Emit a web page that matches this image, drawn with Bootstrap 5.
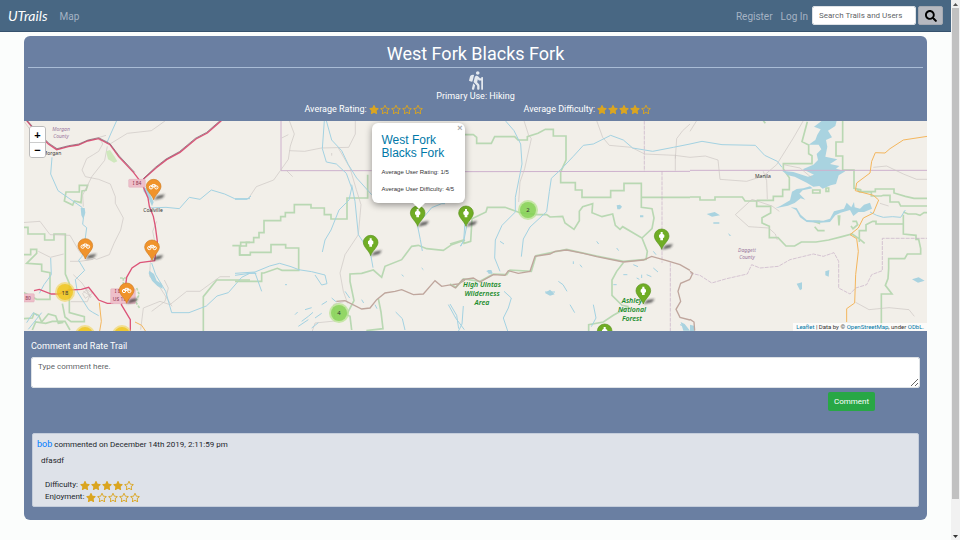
<!DOCTYPE html>
<html lang="en">
<head>
<meta charset="utf-8">
<meta name="viewport" content="width=device-width, initial-scale=1">
<title>UTrails - West Fork Blacks Fork</title>
<link href="https://cdn.jsdelivr.net/npm/bootstrap@5.3.0/dist/css/bootstrap.min.css" rel="stylesheet">
<style>
  body { font-family: Roboto, "Liberation Sans", sans-serif; font-size: 9px; line-height: 12px; background: #fbfdfc; color: #212529; }
  .top-nav { background: #486783; border-bottom: 1px solid #36526d; height: 32px; padding: 0 8px; }
  .brand { font-family: Lato, cursive; font-style: italic; font-size: 14px; line-height: 20px; color: #fff; text-decoration: none; }
  .nav-text { font-size: 10px; line-height: 16px; color: #a5b3c3; text-decoration: none; padding-top: 2px; }
  .nav-form { gap: 2px; }
  .search-box { width: 104px; height: 19px; font-size: 8px; padding: 0 0 0 6px; border-radius: 2px; }
  .search-btn { width: 25px; height: 19px; padding: 0; background: #b6b9c0; border: 1px solid #a5aab2; border-radius: 2px; line-height: 1; }
  .trail-panel { background: #6a7fa2; margin: 4px 24px 20px; border-radius: 6px; }
  .trail-head { padding: 4px; height: 85px; color: #fff; }
  .trail-head h1 { font-size: 18px; line-height: 27px; font-weight: 400; border-bottom: 1px solid #a9bcd6; margin-bottom: 3px; }
  .hiker { height: 19px; width: 14px; fill: #e4e9ef; display: block; margin: 0 auto; }
  .rate-row { margin-top: 1px; }
  .stars { gap: 1px; margin-left: 2px; }
  .stars svg { width: 10px; height: 9px; fill: #daa520; }
  .map-box { height: 210px; background: #f2efe9; overflow: hidden; }
  .zoom-ctl { left: 5px; top: 5px; border: 1px solid #bbb; border-radius: 3px; overflow: hidden; }
  .zoom-ctl button { width: 15px; height: 15px; background: #fff; border: 0; padding: 0; font: bold 11px/14px "Liberation Sans", sans-serif; color: #000; }
  .zoom-ctl button + button { border-top: 1px solid #ccc; }
  .map-popup { left: calc(50% - 104px); top: 2px; width: 93px; height: 80px; background: #fff; border-radius: 6px; padding: 10px; box-shadow: 0 2px 7px #0006; font: 6px/9px "Liberation Sans", sans-serif; color: #333; }
  .map-popup::after { content: ""; position: absolute; left: 41px; bottom: -6px; border: 6px solid transparent; border-top-color: #fff; border-bottom: 0; }
  .map-popup h2 { font-size: 12px; line-height: 13px; font-weight: 400; color: #0078a8; margin: 1px 0 8px; }
  .map-popup p { margin: 0 0 8px; white-space: nowrap; }
  .popup-x { right: 2px; top: 1px; border: 0; background: none; padding: 0; color: #aaa; font: bold 9px/9px "Liberation Sans", sans-serif; }
  .map-credit { right: 0; bottom: 0; background: #ffffffb8; font: 6px/8px Roboto, sans-serif; color: #333; padding: 0 3px; }
  .map-credit a { color: #0078a8; text-decoration: none; }
  .comment-form { padding: 9px 7px 0; }
  .comment-form label { color: #fff; line-height: 12px; margin-bottom: 5px; display: block; }
  .comment-form textarea { height: 31px; min-height: 31px; padding: 3px 6px; font-size: 8px; line-height: 12px; border-radius: 2px; }
  .send-btn { background: #28a745; color: #fff; border: 0; border-radius: 2px; font-size: 8px; line-height: 13px; padding: 3px 6px; margin: 4px 45px 0 0; }
  .note-list { display: flow-root; }
  .note { background: #dee2e9; border: 1px solid #c4cddb; border-radius: 2px; margin: 22px 8px 13px; height: 74px; padding: 4px; font-size: 8px; }
  .note-user { color: #007bff; font-size: 9px; text-decoration: none; }
  .side-scroll { width: 9px; background: #f1f1f1; height: 100vh; top: 0; }
  .side-thumb { width: 7px; background: #c1c1c1; flex: 0 0 91%; }
  .boundary { fill: none; stroke: #b9d8b3; stroke-width: 5; }
  .river { fill: none; stroke: #a3d2e2; stroke-width: 3; }
  .lake { fill: #a9d3e0; }
  .track { fill: none; stroke: #cbc6c3; stroke-width: 2; }
  .county { fill: none; stroke: #c5adc6; stroke-width: 2; stroke-dasharray: 12 3; }
  .state { fill: none; stroke: #cdb0cd; stroke-width: 3; }
  .highway { fill: none; stroke: #dc5478; stroke-width: 4; }
  .rail { fill: none; stroke: #775364; stroke-width: 2; }
  .amber { fill: none; stroke: #f4b65d; stroke-width: 3; }
  .ridge { fill: none; stroke: #bfa69d; stroke-width: 4; }
  .town { font: 5px "Noto Sans", sans-serif; fill: #333; text-anchor: middle; }
  .tally { font-size: 6px; }
  .road-no { fill: #8d3049; }
  .purple { font-style: italic; fill: #9b78a0; }
  .forest { font: italic 600 7px "Noto Sans", sans-serif; fill: #198c2b; text-anchor: middle; }
  .shield { fill: #eebfca; stroke: #d99bad; }
</style>
<script defer src="https://cdn.jsdelivr.net/npm/bootstrap@5.3.0/dist/js/bootstrap.bundle.min.js"></script>
</head>
<body class="d-flex align-items-start">
<svg width="0" height="0" class="position-absolute" aria-hidden="true">
  <defs>
    <symbol id="star-on" viewBox="0 0 576 512"><path d="M259.3 17.8L194 150.2 47.9 171.5c-26.2 3.8-36.7 36.1-17.7 54.6l105.7 103-25 145.5c-4.5 26.3 23.2 46 46.4 33.7L288 439.6l130.7 68.7c23.2 12.2 50.9-7.4 46.4-33.7l-25-145.5 105.7-103c19-18.5 8.5-50.8-17.7-54.6L382 150.2 316.7 17.8c-11.7-23.6-45.6-23.9-57.4 0z"/></symbol>
    <symbol id="star-off" viewBox="0 0 576 512"><path d="M528.1 171.5L382 150.2 316.7 17.8c-11.7-23.6-45.6-23.9-57.4 0L194 150.2 47.9 171.5c-26.2 3.8-36.7 36.1-17.7 54.6l105.7 103-25 145.5c-4.5 26.3 23.2 46 46.4 33.7L288 439.6l130.7 68.7c23.2 12.2 50.9-7.4 46.4-33.7l-25-145.5 105.7-103c19-18.5 8.5-50.8-17.7-54.6zM388.6 312.3l23.7 138.4L288 385.4l-124.3 65.3 23.7-138.4-100.6-98 139-20.2 62.2-126 62.2 126 139 20.2-100.6 98z"/></symbol>
    <filter id="soft" x="-50%" y="-50%" width="200%" height="200%"><feGaussianBlur stdDeviation="3"/></filter>
    <g id="pin-shape">
      <path d="M0 2 L12-11 34-15 26-4z" fill="#333" stroke="none" opacity=".75" filter="url(#soft)"/>
      <path d="M0 1C-4-13-22-25-22-39A22 21 0 0 1 22-39C22-25 4-13 0 1z"/>
    </g>
    <g id="pin-bike">
      <use href="#pin-shape" fill="#f0932b" stroke="#cf7c22" stroke-width="2"/>
      <g fill="none" stroke="#fff" stroke-width="3"><circle cx="-8" cy="-36" r="5"/><circle cx="8" cy="-36" r="5"/><path d="M-8-36l4-8h8l4 8M-4-44l4 8 5-8"/></g>
    </g>
    <g id="pin-hike">
      <use href="#pin-shape" fill="#70ad25" stroke="#5b9320" stroke-width="2"/>
      <path d="M-3-51h6v5l5 4v7l-4 3v6h-8v-6l-4-3v-7l5-4z" fill="#fff"/>
    </g>
  </defs>
</svg>

<div class="flex-grow-1">
  <nav class="top-nav d-flex align-items-center">
    <a class="brand" href="#">UTrails</a>
    <a class="nav-text ms-2 ps-1 me-auto" href="#">Map</a>
    <a class="nav-text" href="#">Register</a>
    <a class="nav-text ms-2 me-1" href="#">Log In</a>
    <form class="nav-form d-flex">
      <input class="form-control search-box" type="text" placeholder="Search Trails and Users" aria-label="Search Trails and Users">
      <button class="search-btn" type="button" aria-label="Search"><svg width="12" height="12" viewBox="0 0 512 512"><path d="M505 442.7L405.3 343c-4.5-4.5-10.6-7-17-7H372c27.6-35.3 44-79.7 44-128C416 93.1 322.9 0 208 0S0 93.1 0 208s93.1 208 208 208c48.3 0 92.7-16.4 128-44v16.3c0 6.4 2.5 12.5 7 17l99.700 99.7c9.4 9.4 24.6 9.4 33.9 0l28.3-28.3c9.4-9.4 9.4-24.6.1-34zM208 336c-70.7 0-128-57.2-128-128 0-70.7 57.2-128 128-128 70.7 0 128 57.2 128 128 0 70.7-57.2 128-128 128z"/></svg></button>
    </form>
  </nav>

  <main class="trail-panel">
    <header class="trail-head text-center">
      <h1>West Fork Blacks Fork</h1>
      <svg class="hiker" viewBox="0 0 384 512" aria-hidden="true"><path d="M80.95 472.23c-4.28 17.16 6.14 34.53 23.28 38.81 2.61.66 5.22.95 7.8.95 14.33 0 27.37-9.7 31.02-24.23l25.24-100.97-52.78-52.78-34.56 138.22zm14.89-196.12L137 117c2.19-8.42-3.14-16.95-11.92-19.06-43.88-10.52-88.35 15.07-99.32 57.17L.49 253.24c-2.19 8.42 3.14 16.95 11.92 19.06l63.56 15.25c8.79 2.1 17.68-3.02 19.87-11.44zM368 160h-16c-8.84 0-16 7.16-16 16v16h-34.75l-46.78-46.78C243.38 134.11 228.61 128 212.91 128c-27.02 0-50.47 18.3-57.03 44.52l-26.92 107.72a32.012 32.012 0 0 0 8.42 30.39L224 397.25V480c0 17.67 14.33 32 32 32s32-14.33 32-32v-82.75c0-17.09-6.66-33.16-18.75-45.25l-46.82-46.82c.15-.5.49-.89.62-1.41l19.89-79.57 22.43 22.43c6 6 14.14 9.38 22.62 9.38h48v240c0 8.84 7.16 16 16 16h16c8.84 0 16-7.16 16-16V176c.01-8.84-7.15-16-15.99-16zM240 96c26.51 0 48-21.49 48-48S266.51 0 240 0s-48 21.49-48 48 21.49 48 48 48z"/></svg>
      <div>Primary Use: Hiking</div>
      <div class="row g-0 w-50 mx-auto rate-row">
        <div class="col-6 d-flex justify-content-center align-items-center"><span>Average Rating:</span>
          <span class="stars d-flex" role="img" aria-label="1 of 5"><svg><use href="#star-on"/></svg><svg><use href="#star-off"/></svg><svg><use href="#star-off"/></svg><svg><use href="#star-off"/></svg><svg><use href="#star-off"/></svg></span></div>
        <div class="col-6 d-flex justify-content-center align-items-center"><span>Average Difficulty:</span>
          <span class="stars d-flex" role="img" aria-label="4 of 5"><svg><use href="#star-on"/></svg><svg><use href="#star-on"/></svg><svg><use href="#star-on"/></svg><svg><use href="#star-on"/></svg><svg><use href="#star-off"/></svg></span></div>
      </div>
    </header>

    <section class="map-box position-relative" aria-label="Trail map">
      <svg class="d-block w-100 h-100" viewBox="24 121 903 210" preserveAspectRatio="xMidYMid slice">
        <!-- western quarter -->
        <svg x="20" y="118" width="230" height="215" viewBox="0 0 690 645" overflow="visible">
          <g class="boundary">
            <path d="M138 222l40 0 0-20h25l-5 15-12 2-3 35-20-5-5 12-25-12z"/>
            <path d="M12 328h12l0 20h50v18h28v-18h34v120l12 28v88l45 12v15h-40l-18-14-8-40"/>
            <path d="M12 410l20 0v-16h18v12l-30 30 45 3v20l25 5v80h-40l-30-16-20-10"/>
            <path d="M12 602l25-2 5-14 14 6 9 20 20-24 22 6 8 22 15-3M37 636l10-24 30 4 20-6 38 0 15 26"/>
            <path d="M690 373h-28v10h-25l0 0h22v28h31M690 486H590l-40 50 0 109"/>
            <path d="M310 480v28M300 480h22M350 510l8 20-12 20 14 22" stroke-dasharray="8 4"/>
          </g>
          <g class="track">
            <path d="M240 62l8 16-12 22-16 10-20 12-14 34 10 20 40 8 35 14 15 38 0 20 24 44-8 36-20 40-14 34-38 14-50-20-30-52-60-2-30-40-70 5M262 85l-8 42-38 48-28 56 2 35M270 78l52-32 72-8 20-14 22-16M12 10l55 75"/>
            <path d="M450 560l-30-10-50 20-8 65M450 560l50-40 40 0 60-44 30 0M395 580l40-30 10-40-12-24M410 310l-12 30 8 40-15 50-2 45 32 35 35 55M150 430l30 0 40-6M160 470l26 25 24 36-8 20-50 0M55 400l36 18 40-10"/>
            <path d="M200 515l18 10-22 16-8-14zM190 520l25 16M196 512l16 28M238 58l20-6M236 66l24 4"/>
          </g>
          <g class="river">
            <path d="M290 8l-18 40-12 28M96 118l-4 50 22 50 72 50 6 16-4 35 12 10-6 46-8 40-10 12 18 30-28 28 6 36 34 54 12 8 18 10"/>
            <path d="M386 270l52-2 40 4 30-34 32 6 34-28 40 12 30 14 46 0M395 435l12 35 30 50 18 64 52 0 52-20 32-30 34-10 40-46 24-12 20 0M92 420l2 50-22 30-14 26M20 614l20-30 12 10M25 634l40-50"/>
          </g>
          <path class="lake" d="M370 205l15 10 10 24 6 14-5 12-10-24-16-22zM182 270h12l2 14-6 20-6-12zM388 458l14 10 8 20 16 10 2 14-16-8-16-16-10-22z"/>
          <path d="M258 100l12-4 14 20 8 14-10 4-18-10z" fill="#cfe8bd"/>
          <path class="highway" d="M20 8L45 38 85 78 110 95 145 86 175 81 203 69 236 62 270 80 296 116 341 164 365 195 384 240 388 265 400 295 406 325 412 370 404 428 360 434 336 450 320 478 312 540 304 560 331 605V640M370 184L408 150 440 125 480 103 528 63 562 45 604 8"/>
          <path class="highway" d="M42 518L58 514 94 528 116 528 146 516 184 514 206 508 236 546 262 556 280 556"/>
          <path class="rail" d="M22 8L47 36 87 76 111 92 146 83 176 78 204 66 236 59 270 77 298 114 344 163M370 182L406 148 438 123 478 101 526 61 560 43 600 8"/>
          <path class="amber" d="M238 554l6 56-6 35M345 612l20 10 12 18"/>
          <rect class="shield" x="326" y="184" width="50" height="24" rx="3"/><rect class="shield" x="272" y="512" width="74" height="45" rx="3"/><rect class="shield" x="-4" y="527" width="47" height="25" rx="3"/>
        </svg>
        <!-- west central -->
        <svg x="235" y="118" width="230" height="215" viewBox="0 0 690 645" overflow="visible">
          <g class="boundary">
            <path d="M14 384h20v-11h22v-14h16v-15h15v-36h50v-12h14v-12h27v-24h50v10h40v20h20v13h48v-63h62v-70M14 384v27h32v-8h62v-23h44v10h39v67h-50l-14-6-40 14h-7v25H0"/>
            <path d="M350 636L345 595 335 590 357 548 345 490V468L380 466 415 456 440 478 450 445 500 425 530 385 550 382 575 392 625 397 650 380 690 366M430 542l8 40 6 50-50 6"/>
          </g>
          <path class="state" d="M138 8v150h272"/>
          <g class="track">
            <path d="M163 8l15 40-12 36-6 40-24 34-20 28-52 20-24 36M163 98l46 2 50-10 82-2 20-40V8M310 90L345 150 364 215 378 260 370 350 330 410 315 465 325 520 338 556M140 60l20-10M155 158l18 18M290 105v8M230 645l10-30 60-6-4-50 30-8" />
          </g>
          <g class="river">
            <path d="M274 8L290 66 320 98 340 140 365 180 410 230M268 8l-6 84 12 40 30 6 30 28 16 44-8 36-30 30-24 60-18 30-8 36M350 200l10 50 10 100 36 54 8 45M548 325l8 40 6 34M560 305l30-36 30-12 10 0M690 310l-4 60-10 14M0 244l36 0 12-10M0 466l60-4 44-18 30-8 34 10 26 10M0 472l60-8 20 56M190 455l40 6 40 10 6 26-16 4-20-30M640 560l22 40 26 35M482 582l20 20 8 34"/>
            <path d="M200 610l20-15 14-12M190 625l30-20M240 600l20-14M210 575l20-6M260 560l16-10M330 520l14 20M150 500h6M380 545l6 10M560 450l5 5M500 470l6 5M290 540l14 12M180 590l8-8M230 630l20-16M420 560l6 12"/>
          </g>
          <path class="ridge" d="M304 550L330 548 380 573 405 570 425 545 450 525 480 520 500 515 535 530 565 528 600 488 620 505 650 500 670 498 690 486"/>
        </svg>
        <!-- east central -->
        <svg x="450" y="118" width="240" height="215" viewBox="0 0 720 645" overflow="visible">
          <g class="boundary">
            <path d="M44 50H70L80 58V76H124L134 56H194L204 66H232V56L264 46 286 34H310V54H348V126L332 162V194H376V216H396V238H482V218H522V196H574V268L606 272 612 300 606 332 576 360M576 238H720M0 378L40 366 42 376 62 370 66 302 108 282 112 268H165L210 284 260 290H290L300 297 338 295 345 315 372 334 388 308V280L398 266 428 257 426 284 456 296 488 288 496 322 510 334 518 326 576 360 592 400 588 426M520 434L500 460 486 486V532L516 562 536 566M536 566L490 592 460 612 416 620V642"/>
            <path d="M0 498L18 508 40 483 90 490 130 468 170 470 180 456 244 460 258 413 350 394 440 414 520 430 588 424"/>
          </g>
          <path class="state" d="M42 161l678-1"/>
          <path class="county" d="M583 8v152M636 160v274M661 434v211"/>
          <g class="track"><path d="M222 8l14 44 8 10-20 90-14 40-4 60M440 8l18 50 20 24 66 6 40 20 90 4 46 6M676 110v48M676 122l4-60 18-24 22-20"/></g>
          <g class="river">
            <path d="M166 8L192 38 212 78 216 138 204 198 196 238V282L156 322 136 366 134 420 150 460M330 157L304 181 298 221 290 281 240 327 220 363 214 416M330 157L370 115 400 82 430 78 482 52 520 66 548 90 608 100 670 88 720 78M50 325l-8 40-10 20M175 645L160 600 175 570 184 540 162 520M0 558l20 34 6 40M40 564l-4 54-12 24M360 560l14 24M430 560l8 40-14 26M325 490l14 10 12 20"/>
            <path d="M110 460l16 6M370 430v8M285 522l30 0M500 390l6 8M610 400l8 10M550 440l14 6M520 470l12 0M590 470l14 6M610 450l14 12M440 370l6 8M150 370l12 8M575 470v10M490 500l10 0M390 440l6 8M690 620l14 5M560 480l8 4"/>
          </g>
          <path class="lake" d="M500 262l10-2 6 6-6 8-8 0zM285 525l15-10 14 14-14 4zM112 456l12 0 4 10-12 2zM570 292h10v6h-10zM692 612l12 6 16 20h-20z"/>
          <path class="ridge" d="M0 500L16 510 38 485 70 480 90 492 130 470 165 472 175 458 205 466 240 460 255 415 300 408 315 400 350 396 400 406 440 416 520 432 580 426 605 415 650 428 690 440 720 457"/>
          <path class="ridge" d="M720 484l-28 12-8 24 8 30-14 24 12 24 30 8"/>
        </svg>
        <!-- eastern quarter -->
        <svg x="690" y="118" width="270" height="215" viewBox="0 0 810 645" overflow="visible">
          <g class="boundary">
            <path d="M0 237h30v9h45v-9h82l8 12 35 0v16h42v20l-26 14v16l22 10v34h26l24 25h26l20-12h44l38-6 40-10 30-8 24 16 14 12M200 247h50v-12h28v-20h20v-36l-18-26v-16h86v-24l-10-6v-26l-20-10 16-60M220 8l6 8M458 8v64h-20v42h20v42h34v55l20 4v6h44v-8h56v12l34 10 26 6h65M500 212l8 10h36l0 12h30l6-2h20v20h26l6 12h80M508 372v-34h20v-18l20-10h10v8h82l0-28 0 58 38 4v12h8l6 28v16h-40l-8 14h-48v30l-2 30-8 20 20 26-32 0v98"/>
            <path d="M640 282l14 6 24 0 12 4 12-8 12 0"/>
            <path d="M368 216h22v9h-22zM408 210h8v10h-8zM445 294l4 0-2 28zM370 310h18v6zM374 326l10 12 20 0M487 310h12l4 10-14 12-6-8"/>
          </g>
          <path class="lake" d="M396 8h44l-4 16-22 14 12 20-18 8 4 20-6 30 36 8-22 14 28 6-10 8 28 8-20 12-8 26-16 4-24 10-10-8-18 2-20-12-36-18-20-4-18-14 34 4 44 14 18-6-34-16 32-14 14-14-4-18 14-14-8-14-30 0 20-14 6-16 10-16-20-8z"/>
          <path class="lake" d="M360 205l-20 6-20 2-14 8-6 26-28 16-16 8 38-8 20-8 18-14 14 4-18-18 10-10 30-6zM302 268L320 270 332 290 350 306 400 308 420 302 432 280 462 272 470 254 484 268 492 252 494 268 510 272 522 260 540 254 546 272 522 282 505 282 490 294 480 276 452 284 436 292 420 312 390 314 350 312 330 298 318 276z"/>
          <path class="lake" d="M50 288l24-6 16 10-24 4zM70 313h18v4h-18zM114 345l10 8-6 0zM406 460l12-4-2 20-10-4zM320 497l16-4 0 20-6 4zM666 484l20-6 18 10-20 6zM0 620l14 4v16H0z"/>
          <path class="river" d="M0 78L36 70 96 80 196 82 224 112 262 130 276 148M540 282l20 10 20 6 28-2 24 2 14-22" />
          <path class="state" d="M0 157h713"/>
          <g class="track"><path d="M0 118L46 114 84 126 90 184 170 190 220 174 260 140 310 60 340 8M220 160l10 28 2 56M136 290l50-46 60 20 22 16M136 290l40 36 60 4 20 18 6 18M550 148l40-4 50 24 40 16 33 0M497 553l40 22 60-6 60 6 16 20M0 40l20-32M280 140l50 10 36 30M570 256l26 8"/></g>
          <path class="county" d="M0 465L30 472 65 495 110 482 172 468 185 440 210 450 265 445 300 425 370 408 400 415 432 404 446 430V510L480 528 497 510 530 500 545 470 577 458V361H713"/>
          <path class="amber" d="M712 55L640 66 600 92 585 105 556 104 545 130 540 165 500 195 496 218 550 232 566 246 550 285 520 300 505 330 480 350 500 362 505 400 497 470 494 555 470 572V612"/>
          <path class="ridge" d="M0 460l8 6-8 18M0 604l12 8 2 26"/>
        </svg>
        <!-- place names -->
        <g class="town"><text x="52" y="155">Morgan</text><text x="153" y="212">Coalville</text><text x="763" y="178">Manila</text>
          <text class="road-no" x="137" y="185">I 84</text><text class="road-no" x="119" y="293">I 80</text><text class="road-no" x="121" y="301">US 189</text><text class="road-no" x="28" y="300">80</text>
          <text class="purple" x="61" y="131">Morgan</text><text class="purple" x="61" y="138">County</text><text class="purple" x="747" y="252">Daggett</text><text class="purple" x="747" y="259">County</text></g>
        <g class="forest"><text x="482" y="287">High Uintas</text><text x="482" y="296">Wilderness</text><text x="482" y="305">Area</text><text x="632" y="303">Ashley</text><text x="632" y="312">National</text><text x="632" y="321">Forest</text></g>
        <!-- clusters and pins -->
        <g fill="#f1d357" opacity=".6"><circle cx="65" cy="292" r="10"/><circle cx="85" cy="335" r="10"/><circle cx="122" cy="335" r="10"/></g>
        <g fill="#f0c20c" opacity=".7"><circle cx="65" cy="292" r="8"/><circle cx="85" cy="335" r="8"/><circle cx="122" cy="335" r="8"/></g>
        <g fill="#b5e28c" opacity=".7"><circle cx="339" cy="313" r="10"/><circle cx="528" cy="210" r="10"/></g>
        <g fill="#6ecc39" opacity=".6"><circle cx="339" cy="313" r="8"/><circle cx="528" cy="210" r="8"/></g>
        <g class="town tally"><text x="65" y="295">18</text><text x="339" y="315">4</text><text x="528" y="212">2</text></g>
        <svg x="20" y="118" width="230" height="215" viewBox="0 0 690 645" overflow="visible">
          <use href="#pin-bike" x="401" y="244"/><use href="#pin-bike" x="196" y="422"/><use href="#pin-bike" x="396" y="426"/><use href="#pin-bike" x="320" y="555"/>
        </svg>
        <svg x="450" y="118" width="240" height="215" viewBox="0 0 720 645" overflow="visible">
          <use href="#pin-hike" x="-238" y="412"/><use href="#pin-hike" x="-97" y="324"/><use href="#pin-hike" x="48" y="324"/><use href="#pin-hike" x="635" y="393"/><use href="#pin-hike" x="580" y="557"/><use href="#pin-hike" x="464" y="678"/>
        </svg>
      </svg>
      <div class="zoom-ctl position-absolute d-flex flex-column"><button type="button" aria-label="Zoom in">+</button><button type="button" aria-label="Zoom out">−</button></div>
      <div class="map-popup position-absolute">
        <button class="popup-x position-absolute" type="button" aria-label="Close">×</button>
        <h2>West Fork Blacks Fork</h2>
        <p>Average User Rating: 1/5</p>
        <p>Average User Difficulty: 4/5</p>
      </div>
      <div class="map-credit position-absolute"><a href="#">Leaflet</a> | Data by © <a href="#">OpenStreetMap</a>, under <a href="#">ODbL.</a></div>
    </section>

    <form class="comment-form">
      <label for="comment">Comment and Rate Trail</label>
      <textarea class="form-control" id="comment" placeholder="Type comment here."></textarea>
      <div class="d-flex justify-content-end"><button class="send-btn" type="button">Comment</button></div>
    </form>

    <div class="note-list">
      <article class="note">
        <div><a class="note-user" href="#">bob</a> commented on December 14th 2019, 2:11:59 pm</div>
        <p class="ms-1 mt-1 mb-2 pb-1">dfasdf</p>
        <div class="d-flex align-items-center ms-2">Difficulty:
          <span class="stars d-flex" role="img" aria-label="4 of 5"><svg><use href="#star-on"/></svg><svg><use href="#star-on"/></svg><svg><use href="#star-on"/></svg><svg><use href="#star-on"/></svg><svg><use href="#star-off"/></svg></span></div>
        <div class="d-flex align-items-center ms-2">Enjoyment:
          <span class="stars d-flex" role="img" aria-label="1 of 5"><svg><use href="#star-on"/></svg><svg><use href="#star-off"/></svg><svg><use href="#star-off"/></svg><svg><use href="#star-off"/></svg><svg><use href="#star-off"/></svg></span></div>
      </article>
    </div>
  </main>
</div>

<div class="side-scroll position-sticky flex-shrink-0 d-flex flex-column align-items-center" aria-hidden="true">
  <svg width="9" height="8" viewBox="0 0 9 8"><path d="M2 6l2.500-3L7 6z" fill="#555"/></svg>
  <div class="side-thumb"></div>
  <svg class="mt-auto" width="9" height="8" viewBox="0 0 9 8"><path d="M2 3l2.500 3L7 3z" fill="#333"/></svg>
</div>
</body>
</html>
